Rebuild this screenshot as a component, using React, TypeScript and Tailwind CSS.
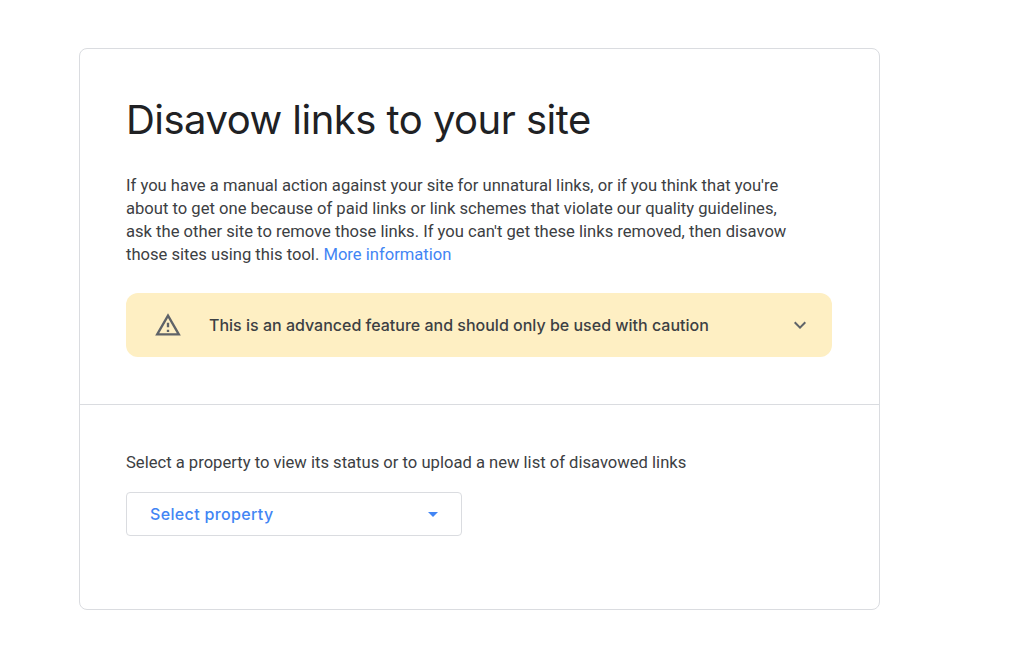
function WarningIcon() {
  return (
    <svg viewBox="0 0 24 24" className="h-7 w-7 shrink-0 fill-[#5f6368]">
      <path d="M12 5.99L19.53 19H4.47L12 5.99M12 2L1 21h22L12 2zm1 14h-2v2h2v-2zm0-6h-2v4h2v-4z" />
    </svg>
  );
}

function ExpandIcon() {
  return (
    <svg viewBox="0 0 24 24" className="h-6 w-6 shrink-0 fill-[#5f6368]">
      <path d="M16.59 8.59L12 13.17 7.41 8.59 6 10l6 6 6-6z" />
    </svg>
  );
}

function DropIcon() {
  return (
    <svg viewBox="0 0 24 24" className="h-6 w-6 shrink-0 fill-[#4285f4]">
      <path d="M7 10l5 5 5-5z" />
    </svg>
  );
}

export default function App() {
  return (
    <div className="min-h-[646px] bg-white pl-[79px] pt-12 font-['Roboto',sans-serif]">
      <div className="h-[562px] w-[801px] rounded-lg border border-[#dadce0] bg-white">
        <div className="h-[356px] border-b border-[#dadce0] pl-[46px] pr-12 pt-[45px]">
          <h1 className="font-['Inter',sans-serif] text-[40px] leading-[52px] tracking-[-0.52px] text-[#202124]">
            Disavow links to your site
          </h1>
          <p className="mt-[28px] w-[680px] text-[16.6px] leading-[23px] text-[#3c4043]">
            If you have a manual action against your site for unnatural links, or if you think that you're about to get
            one because of paid links or link schemes that violate our quality guidelines, ask the other site to remove
            those links. If you can't get these links removed, then disavow those sites using this tool.{' '}
            <a className="text-[#4285f4]">More information</a>
          </p>
          <div className="mt-[27px] flex h-16 w-[706px] items-center rounded-xl bg-[#feefc3] pl-7 pr-5">
            <WarningIcon />
            <span className="ml-[27px] flex-1 font-['Inter',sans-serif] text-base font-medium text-[#3c4043]">
              This is an advanced feature and should only be used with caution
            </span>
            <ExpandIcon />
          </div>
        </div>
        <div className="pl-[46px] pt-[46px]">
          <p className="text-[16.6px] leading-6 text-[#3c4043]">
            Select a property to view its status or to upload a new list of disavowed links
          </p>
          <button className="mt-[17px] flex h-11 w-[336px] items-center justify-between rounded border border-[#dadce0] pl-[23px] pr-4 font-['Inter',sans-serif] text-base font-medium tracking-[0.35px] text-[#4285f4]">
            Select property
            <DropIcon />
          </button>
        </div>
      </div>
    </div>
  );
}
